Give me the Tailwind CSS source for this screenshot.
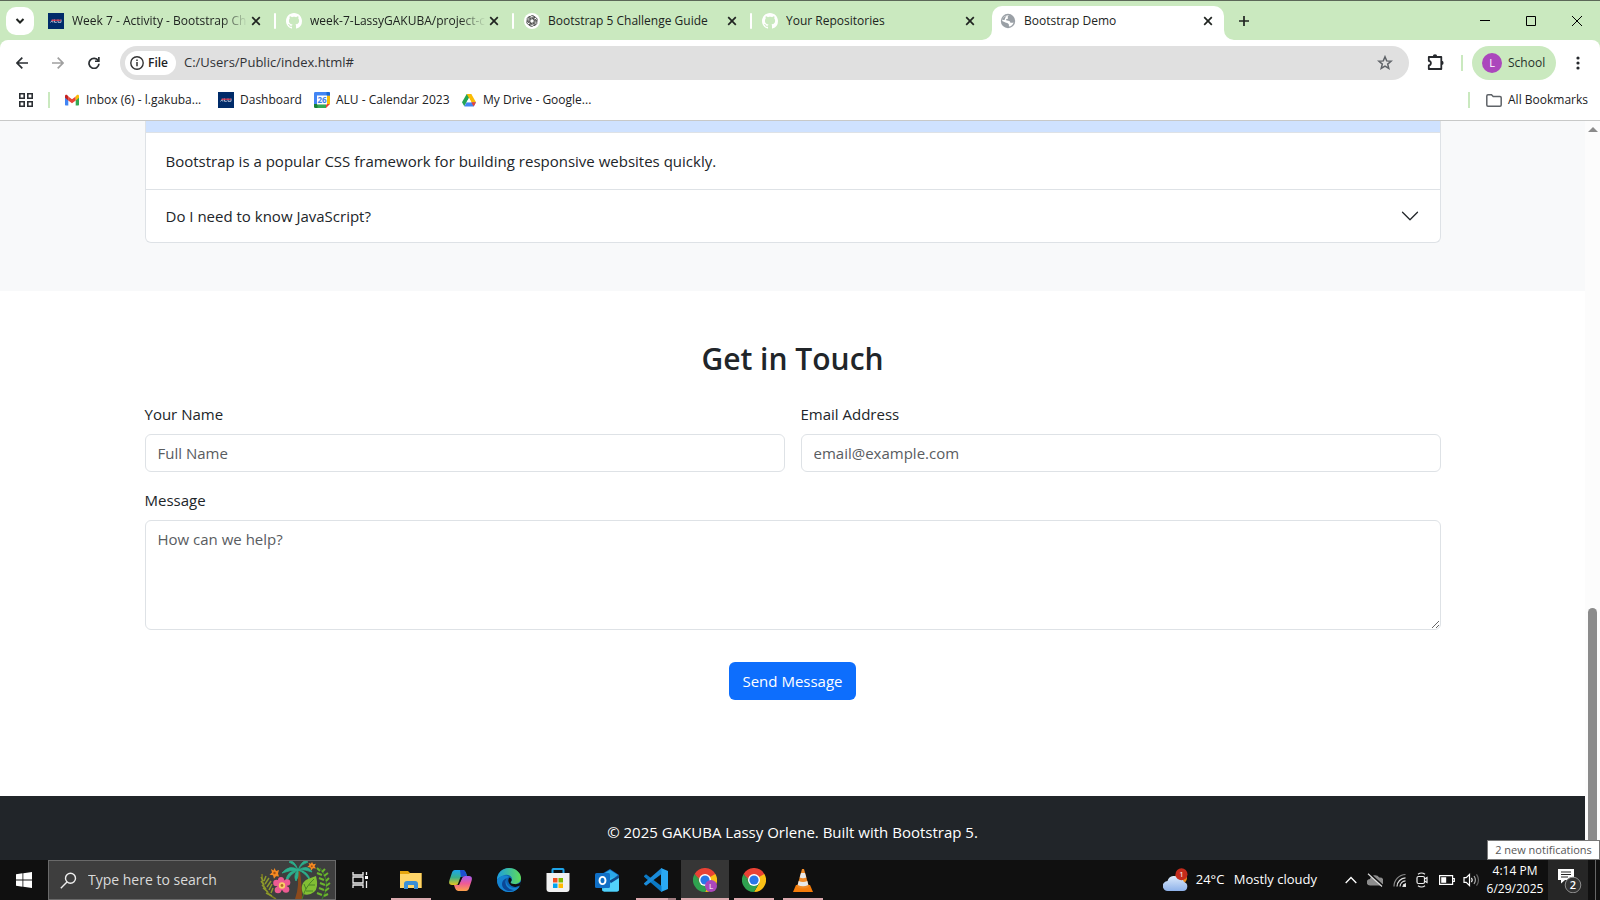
<!DOCTYPE html>
<html lang="en">
<head>
<meta charset="utf-8">
<title>Bootstrap Demo</title>
<script src="https://cdn.jsdelivr.net/npm/@tailwindcss/browser@4"></script>
</head>
<body class="h-screen overflow-hidden flex flex-col bg-white font-['Open_Sans',sans-serif] text-[#212529]">

<svg class="hidden">
  <symbol id="x" viewBox="0 0 10 10"><path d="M1.200 1.200l7.600 7.600M8.800 1.200L1.200 8.800" stroke="#202421" stroke-width="1.700" fill="none"/></symbol>
  <symbol id="alu" viewBox="0 0 16 16"><rect width="16" height="16" fill="#002b69"/><path d="M2.500 9.500L4.800 6.800V9.500M6.500 6.500V9.300H8.800M10 6.500V9.300H13V6.500" stroke="#c3c9dc" stroke-width=".9" fill="none"/><path d="M3.500 7.200h9.500" stroke="#e4364a" stroke-width="1.200"/></symbol>
  <symbol id="github" viewBox="0 0 16 16"><path fill="#fff" d="M8 0C3.580 0 0 3.580 0 8c0 3.540 2.290 6.530 5.470 7.590.4.070.55-.17.55-.38 0-.19-.01-.82-.01-1.490-2.010.37-2.530-.49-2.690-.94-.09-.23-.48-.94-.82-1.130-.28-.15-.68-.52-.01-.53.63-.01 1.080.58 1.230.82.72 1.210 1.870.87 2.330.66.07-.52.28-.87.51-1.070-1.780-.2-3.640-.89-3.640-3.950 0-.87.31-1.590.82-2.150-.08-.2-.36-1.020.08-2.120 0 0 .67-.21 2.200.82.64-.18 1.320-.27 2-.27s1.360.09 2 .27c1.530-1.040 2.200-.82 2.200-.82.44 1.100.16 1.920.08 2.120.51.56.82 1.270.82 2.150 0 3.070-1.870 3.750-3.650 3.950.29.25.54.73.54 1.480 0 1.070-.01 1.930-.01 2.200 0 .21.15.46.55.38A8.010 8.010 0 0 0 16 8c0-4.420-3.580-8-8-8"/></symbol>
  <symbol id="chrome" viewBox="0 0 24 24"><path d="M12 12L1.600 6A12 12 0 0 1 22.400 6z" fill="#e94235"/><path d="M12 6H22.400A12 12 0 0 1 12 24l5.200-9z" fill="#fbc116"/><path d="M6.800 15L1.600 6A12 12 0 0 0 12 24l5.200-9z" fill="#2fa24f"/><path d="M12 6h10.400L17 9zM1.600 6L6.800 15 8 8z" fill="#e94235"/><path d="M1.600 6L6.800 15 12 17z" fill="#2fa24f"/><circle cx="12" cy="12" r="6" fill="#fff"/><circle cx="12" cy="12" r="4.600" fill="#2a76e8"/></symbol>
  <symbol id="petal" viewBox="0 0 16 16"><path d="M6 8.800V4.800a2.300 2.300 0 0 1 4.300-1.100M6 5.700l3.500-2 1.600-.2" fill="none" stroke="#333" stroke-width=".75"/></symbol>
</svg>

<!-- Tab strip -->
<header class="flex h-10 shrink-0 items-stretch border-t border-[#5c6858] bg-[#cae9bf] text-xs text-[#202421]">
  <div class="flex w-[38px] items-center pl-1.5 pt-px">
    <button aria-label="Search tabs" class="flex size-7 items-center justify-center rounded-[10px] bg-white"><svg width="10" height="8" viewBox="0 0 10 8"><path d="M1.500 2L5 5.500 8.500 2" stroke="#202421" stroke-width="2" fill="none"/></svg></button>
  </div>
  <div class="flex w-[238px] items-center pl-2.5">
    <svg class="size-4 shrink-0"><use href="#alu"/></svg>
    <a href="#" class="ml-2 w-[176px] overflow-hidden whitespace-nowrap mask-r-from-85%">Week 7 - Activity - Bootstrap Ch</a>
    <button aria-label="Close tab" class="ml-[3px]"><svg class="size-[10px]"><use href="#x"/></svg></button>
    <span class="ml-auto h-4 w-0.5 rounded bg-white"></span>
  </div>
  <div class="flex w-[238px] items-center pl-2.5">
    <svg class="size-4 shrink-0"><use href="#github"/></svg>
    <a href="#" class="ml-2 w-[176px] overflow-hidden whitespace-nowrap mask-r-from-85%">week-7-LassyGAKUBA/project-c</a>
    <button aria-label="Close tab" class="ml-[3px]"><svg class="size-[10px]"><use href="#x"/></svg></button>
    <span class="ml-auto h-4 w-0.5 rounded bg-white"></span>
  </div>
  <div class="flex w-[238px] items-center pl-2.5">
    <svg class="size-4 shrink-0" viewBox="0 0 16 16"><circle cx="8" cy="8" r="8" fill="#fff"/><use href="#petal"/><use href="#petal" transform="rotate(60 8 8)"/><use href="#petal" transform="rotate(120 8 8)"/><use href="#petal" transform="rotate(180 8 8)"/><use href="#petal" transform="rotate(240 8 8)"/><use href="#petal" transform="rotate(300 8 8)"/></svg>
    <a href="#" class="ml-2 w-[176px] overflow-hidden whitespace-nowrap">Bootstrap 5 Challenge Guide</a>
    <button aria-label="Close tab" class="ml-[3px]"><svg class="size-[10px]"><use href="#x"/></svg></button>
    <span class="ml-auto h-4 w-0.5 rounded bg-white"></span>
  </div>
  <div class="flex w-[238px] items-center pl-2.5">
    <svg class="size-4 shrink-0"><use href="#github"/></svg>
    <a href="#" class="ml-2 w-[176px] overflow-hidden whitespace-nowrap">Your Repositories</a>
    <button aria-label="Close tab" class="ml-[3px]"><svg class="size-[10px]"><use href="#x"/></svg></button>
  </div>
  <div class="relative mt-[5px] ml-0.5 flex w-[232px] items-center rounded-t-[10px] bg-white pb-[5px] pl-2">
    <svg class="absolute bottom-0 -left-2.5 size-2.5" viewBox="0 0 10 10"><path d="M10 0v10H0A10 10 0 0 0 10 0" fill="#fff"/></svg>
    <svg class="absolute -right-2.5 bottom-0 size-2.5" viewBox="0 0 10 10"><path d="M0 0v10h10A10 10 0 0 1 0 0" fill="#fff"/></svg>
    <svg class="size-4 shrink-0" viewBox="0 0 16 16"><circle cx="8" cy="8" r="7.200" fill="#9aa0a6"/><path d="M9.500 2.300C8.200 2.600 7.400 3.400 7.800 4.500c.4.900 0 1.400-.9 1.600-1.300.2-1 1.400 0 1.500 2.200.1 3.200.6 3.500 2.100.9.300 2 .2 3.200-.3-.6 2-2.400 3.800-4.500 4.200-.5-1 .2-2.200-.8-2.900-.6-.5-1.500-.7-2.300-.9L2.200 8C2.200 4.800 5.300 1.700 9.500 2.300" fill="#fff"/><path d="M2.300 7C3 4.900 4.600 3.300 6.600 2.700L5.200 5 4.500 7z" fill="#9aa0a6"/></svg>
    <a href="#" class="ml-2 w-[168px] overflow-hidden whitespace-nowrap">Bootstrap Demo</a>
    <button aria-label="Close tab" class="ml-[11px]"><svg class="size-[10px]"><use href="#x"/></svg></button>
  </div>
  <button aria-label="New tab" class="ml-3.5"><svg width="12" height="12" viewBox="0 0 12 12"><path d="M6 1v10M1 6h10" stroke="#202421" stroke-width="1.700"/></svg></button>
  <div class="ml-auto flex">
    <button aria-label="Minimize" class="flex w-[46px] items-center justify-center"><svg width="10" height="10"><path d="M0 4.500h10" stroke="#000"/></svg></button>
    <button aria-label="Maximize" class="flex w-[46px] items-center justify-center"><svg width="10" height="10"><path d="M.5.5h9v9h-9z" stroke="#000" fill="none"/></svg></button>
    <button aria-label="Close" class="flex w-[46px] items-center justify-center"><svg width="10" height="10"><path d="M0 0l10 10M10 0L0 10" stroke="#000"/></svg></button>
  </div>
</header>

<!-- Toolbar -->
<div class="shrink-0 bg-[#cae9bf]">
<div class="flex h-[46px] items-center rounded-t-lg bg-white text-xs">
  <button aria-label="Back" class="ml-4"><svg width="12" height="12" viewBox="0 0 12 12"><path d="M12 6H1M6.300.700L1 6l5.300 5.300" fill="none" stroke="#2b2f33" stroke-width="1.700"/></svg></button>
  <button aria-label="Forward" class="ml-6"><svg width="12" height="12" viewBox="0 0 12 12"><path d="M0 6h11M5.700.700L11 6l-5.300 5.300" fill="none" stroke="#a0a0a0" stroke-width="1.700"/></svg></button>
  <button aria-label="Reload" class="ml-6"><svg width="12" height="12" viewBox="0 0 12 12"><path d="M10.300 3.800A5 5 0 1 0 11 6.800" fill="none" stroke="#2b2f33" stroke-width="1.700"/><path d="M11.700 0v5H7V3.500h3V0z" fill="#2b2f33"/></svg></button>
  <div class="ml-5 flex h-[34px] flex-1 items-center rounded-full bg-[#e0e0e0] pl-[5px]">
    <button class="flex h-6 items-center gap-1 rounded-full bg-white pr-2 pl-[5px] font-semibold text-[#202124]"><svg width="14" height="14" viewBox="0 0 14 14"><circle cx="7" cy="7" r="6.200" fill="none" stroke="#333" stroke-width="1.400"/><path d="M7 6v4.200M7 3.500v1.500" stroke="#333" stroke-width="1.500"/></svg>File</button>
    <input aria-label="Address" value="C:/Users/Public/index.html#" class="ml-2 flex-1 bg-transparent text-[13px] text-[#303236] outline-none">
    <button aria-label="Bookmark" class="mr-4"><svg width="16" height="16" viewBox="0 0 16 16"><path d="M8 1.800l1.700 4.100 4.400.3-3.400 2.900 1.100 4.300L8 11.100l-3.800 2.300 1.100-4.300L1.900 6.200l4.400-.3z" fill="none" stroke="#5f6368" stroke-width="1.500"/></svg></button>
  </div>
  <button aria-label="Extensions" class="ml-[18px] pb-0.5"><svg width="18" height="18" viewBox="0 0 18 18"><path d="M1.800 4h12.500v12H1.800v-3.600c2.800-.3 2.800-4.300 0-4.600z" fill="none" stroke="#26292d" stroke-width="1.800" stroke-linejoin="round"/><path d="M5.800 3.500a2.200 2.200 0 0 1 4.400 0zM14.500 7.800a2.100 2.100 0 0 1 0 4.200z" fill="#26292d"/></svg></button>
  <span class="ml-4 h-4 w-0.5 bg-[#cae9bf]"></span>
  <button class="ml-[9px] flex h-[34px] w-21 items-center rounded-full bg-[#cae9bf] pl-2.5 text-[#26322a]"><span class="mr-1.5 flex size-5 items-center justify-center rounded-full bg-[#ab47bc] text-[11px] text-white">L</span>School</button>
  <button aria-label="Menu" class="mr-5 ml-5"><svg width="4" height="14" viewBox="0 0 4 14"><g fill="#26292d"><circle cx="2" cy="2" r="1.600"/><circle cx="2" cy="7" r="1.600"/><circle cx="2" cy="12" r="1.600"/></g></svg></button>
</div>
</div>

<!-- Bookmarks bar -->
<nav aria-label="Bookmarks" class="flex h-[35px] shrink-0 items-center border-b border-[#c8c9c8] bg-white pb-1.5 text-xs whitespace-nowrap text-[#202124]">
  <button aria-label="Apps" class="ml-[19px]"><svg width="14" height="14" viewBox="0 0 14 14"><path d="M.8.8h4.400v4.400H.8zM8.800.8h4.400v4.400H8.800zM.8 8.800h4.400v4.400H.8zM8.800 8.800h4.400v4.400H8.800z" fill="none" stroke="#2b2f33" stroke-width="1.600"/></svg></button>
  <span class="mx-[15px] h-4 w-0.5 bg-[#cae9bf]"></span>
  <a href="#" class="flex w-[153px] items-center gap-[7px]"><svg width="14" height="12" viewBox="0 0 14 12"><path d="M0 2v8.500c0 .6.400 1 1 1h2.300V5z" fill="#4285f4"/><path d="M14 2v8.500c0 .6-.4 1-1 1h-2.300V5z" fill="#34a853"/><path d="M3.300 2.600v4L7 9.300l3.700-2.700v-4L7 5.300z" fill="#ea4335"/><path d="M0 2v1.800l3.300 2.800v-4L2.200 1C1.200.3 0 .9 0 2" fill="#c5221f"/><path d="M14 2v1.800l-3.300 2.800v-4L11.800 1c1-.7 2.200-.1 2.200 1" fill="#fbbc04"/></svg>Inbox (6) - l.gakuba...</a>
  <a href="#" class="flex w-24 items-center gap-1.5"><svg class="size-4"><use href="#alu"/></svg>Dashboard</a>
  <a href="#" class="flex w-[148px] items-center gap-1.5"><svg width="16" height="16" viewBox="0 0 16 16"><path d="M0 1.300C0 .6.600 0 1.300 0h13.400c.7 0 1.300.6 1.300 1.300V4H0z" fill="#4285f4"/><path d="M0 3h4v9H0z" fill="#4285f4"/><path d="M13 3.500h3V12h-3z" fill="#fbbc04"/><path d="M0 12h12v4H1.300A1.300 1.300 0 0 1 0 14.700z" fill="#188038"/><path d="M3.500 12.500H12V16H3.500z" fill="#34a853"/><path d="M12 12h4l-4 4z" fill="#ea4335"/><path d="M12.500 0h2.200c.7 0 1.300.6 1.300 1.300v2.200h-3.500z" fill="#1967d2"/><path d="M3 3.500h10v9H3z" fill="#fff"/><text x="8" y="11" font-size="8" font-weight="700" text-anchor="middle" fill="#3b7de8">26</text></svg>ALU - Calendar 2023</a>
  <a href="#" class="flex items-center gap-[7px]"><svg width="14" height="13" viewBox="0 0 14 13"><path d="M4.700 0L0 8.300l2.300 4L9.300 0z" fill="#23a455"/><path d="M4.700 0h4.600L14 8.300H9.300z" fill="#fbbc04"/><path d="M4.700 8.300H14l-2.300 4.200H2.300z" fill="#4285f4"/><path d="M9.300 8.300H14l-2.300 4.200z" fill="#ea4335"/><path d="M7 4L4.500 8.300h5z" fill="#fff"/></svg>My Drive - Google...</a>
  <span class="ml-auto h-4 w-0.5 bg-[#cae9bf]"></span>
  <a href="#" class="mr-3 ml-4 flex items-center gap-1.5"><svg width="16" height="13" viewBox="0 0 16 13"><path d="M.8 2c0-.7.5-1.200 1.200-1.200h3.500l1.700 1.700H14c.7 0 1.200.5 1.200 1.200V11c0 .7-.5 1.200-1.200 1.200H2c-.7 0-1.200-.5-1.200-1.200z" fill="none" stroke="#5f6368" stroke-width="1.500"/></svg>All Bookmarks</a>
</nav>

<!-- Page viewport -->
<div class="flex min-h-0 flex-1">
  <main class="min-w-0 flex-1 overflow-hidden text-[15px] leading-6">
    <section class="bg-[#f8f9fa] pb-12">
      <div class="mx-auto max-w-[1320px] px-3">
        <div class="rounded-b-md border border-t-0 border-[#dee2e6] bg-white">
          <div class="h-3 border-b border-[#dee2e6] bg-[#cfe2ff]"></div>
          <p class="px-5 py-4">Bootstrap is a popular CSS framework for building responsive websites quickly.</p>
          <button class="flex w-full items-center justify-between border-t border-[#dee2e6] px-5 py-3.5 text-left">Do I need to know JavaScript?
            <svg class="size-5" viewBox="0 0 16 16" fill="none" stroke="#212529" stroke-linecap="round" stroke-linejoin="round"><path d="m2 5 6 6 6-6"/></svg></button>
        </div>
      </div>
    </section>
    <section class="bg-white py-12">
      <div class="mx-auto max-w-[1320px] px-3">
        <h2 class="mb-[23px] text-center text-[30px] leading-10 font-semibold">Get in Touch</h2>
        <form class="mb-12 grid grid-cols-2 gap-4">
          <div class="flex flex-col gap-2"><label for="name">Your Name</label><input id="name" placeholder="Full Name" class="h-[38px] rounded-md border border-[#dee2e6] px-3 placeholder:text-[#595c5f]"></div>
          <div class="flex flex-col gap-2"><label for="email">Email Address</label><input id="email" type="email" placeholder="email@example.com" class="h-[38px] rounded-md border border-[#dee2e6] px-3 placeholder:text-[#595c5f]"></div>
          <div class="col-span-2 flex flex-col gap-2"><label for="message">Message</label><textarea id="message" placeholder="How can we help?" class="h-[110px] resize-y rounded-md border border-[#dee2e6] px-3 py-1.5 placeholder:text-[#595c5f]"></textarea></div>
          <div class="col-span-2 mt-4 flex justify-center"><button type="button" class="h-[38px] rounded-md bg-[#0d6efd] px-[13px] text-white">Send Message</button></div>
        </form>
      </div>
    </section>
    <footer class="bg-[#212529] py-6 text-center text-white">© 2025 GAKUBA Lassy Orlene. Built with Bootstrap 5.</footer>
  </main>
  <div class="flex w-[15px] flex-col items-center bg-[#fcfcfc]">
    <svg class="mt-1.5 shrink-0" width="10" height="5" viewBox="0 0 10 5"><path d="M5 0l5 5H0z" fill="#8b8b8b"/></svg>
    <div class="grow-[66]"></div>
    <div class="w-[9px] grow-[35] rounded-t-full bg-[#8b8b8b]"></div>
  </div>
</div>

<!-- Taskbar -->
<div class="relative flex h-10 shrink-0 items-center bg-[#101010] text-white">
  <button aria-label="Start" class="flex w-12 justify-center"><svg width="16" height="16" viewBox="0 0 16 16"><path d="M0 2.200l6.500-.9v6.300H0zM7.300 1.200L16 0v7.600H7.300zM0 8.400h6.500v6.300L0 13.800zM7.300 8.400H16V16l-8.700-1.200z" fill="#fff"/></svg></button>
  <label class="flex h-10 w-72 items-center border border-[#6a6a6a] bg-[#3e3e3e] pl-[11px]">
    <svg width="17" height="17" viewBox="0 0 17 17"><circle cx="10.500" cy="6.200" r="5" fill="none" stroke="#eee" stroke-width="1.400"/><path d="M7 10L.8 16.200" stroke="#eee" stroke-width="1.400"/></svg>
    <input aria-label="Search" placeholder="Type here to search" class="ml-[11px] w-[170px] bg-transparent text-sm outline-none placeholder:text-[#dadada]">
    <svg class="ml-0.5" width="72" height="38" viewBox="0 0 72 38">
      <g stroke="#7d7d22" stroke-width="1.500" fill="none"><path d="M2 13q0 18 14 25"/><path d="M3 20l-2-4M4 24l-3-4M6 28l-4-4M8 31l-5-4M12 35l-6-3M4 20l2-5M5 23l4-6M7 26l4-6M9 29l3-6M11 32l2-5" stroke="#8c9a2c"/></g>
      <path d="M35 38Q40 24 37 11l3-1q2 17 2 28z" fill="#8c4a1c"/>
      <g fill="#2bb08d" stroke="#2bb08d" stroke-width=".8"><path d="M38 9Q30 3 22 12q8-3 16-3M38 9Q34-2 29 1q6 2 9 8M38 9Q43-3 48 1q-7 2-10 8M38 9Q48 3 52 11q-7-3-14-2M38 9q-12 1-12 12 4-8 12-12M38 9q11 1 12 11-4-8-12-11M38 9q-5 5-2 11 3-4 2-11"/></g>
      <g stroke="#6ab52c" stroke-width="2" fill="none"><path d="M60 7q12 15 2 31" stroke="#3e7d2c" stroke-width="1.200"/><path d="M60 10l-3-3M62 14l-5-2M64 19l-5-2M65 24l-5-2M64 29l-5-2M62 34l-5-2M62 11l3-3M64 15l4-3M66 20l3-3M66 25l4-3M65 30l4-3M64 35l4-2"/></g>
      <path d="M43 33q-4-11 5-15l8-3q3 12-2 16-5 4-11 2" fill="#82bf34"/><path d="M42 38q3-12 12-20M46 28l-2-5M49 24h6M46 30h7" stroke="#4a8428" fill="none"/>
      <g fill="#ee5b92"><circle cx="21" cy="19" r="3"/><circle cx="27" cy="21.500" r="3.300"/><circle cx="26" cy="28.500" r="3.300"/><circle cx="18" cy="29" r="3.300"/><circle cx="16.500" cy="22" r="3.300"/><circle cx="22" cy="24.500" r="5"/></g><circle cx="22" cy="24.500" r="3.200" fill="#f9cf67"/><circle cx="22" cy="24.500" r="1.400" fill="#b56a2c"/>
      <path d="M14.500 7l1.500 3 3-1-1 3.500 1 3-3-.2-2 2.500-1-3.500-3.500-.5 2.500-2.300-1-3.500 2.500 1.500z" fill="#f58a22"/><path d="M52 1l1.200 2.200L56 2.700l-1.500 2.500L56 7.500l-3-.2-1.700 2.200-1-3-3-.4 2.200-2L48.500 2l2.400.7z" fill="#f58a22"/><circle cx="14.500" cy="12" r="1.200" fill="#a75214"/><circle cx="51.800" cy="5.200" r="1" fill="#a75214"/>
    </svg>
  </label>
  <button aria-label="Task view" class="flex w-12 justify-center"><svg width="17" height="16" viewBox="0 0 17 16" fill="none" stroke="#eee" stroke-width="1.300"><path d="M1 0v3h10V0M1 16v-3h10v3M1 5h10v6H1zM14.500 0v3M14.500 9v7"/><path d="M13 4h3v3h-3z" fill="#fff" stroke="none"/></svg></button>
  <div class="ml-[3px] flex h-10 gap-px">
    <button aria-label="File Explorer" class="relative flex w-12 items-center justify-center"><svg width="22" height="18" viewBox="0 0 22 18"><path d="M0 0h8l2 2h11.500v15H0z" fill="#e6a50f"/><path d="M0 3h9l1-1h11.500v15H0z" fill="#ffd569"/><path d="M4 18v-5q0-3 3-3h8q3 0 3 3v5h-4v-4H8v4z" fill="#3b8fd6"/></svg><span class="absolute inset-x-1 bottom-0 h-0.5 bg-[#dba9ae]"></span></button>
    <button aria-label="Copilot" class="flex w-12 items-center justify-center"><svg width="23" height="21" viewBox="0 0 23 21"><defs><linearGradient id="c1" x2="0" y2="1"><stop stop-color="#1aa6ef"/><stop offset=".5" stop-color="#3ab08a"/><stop offset="1" stop-color="#e6c41e"/></linearGradient><linearGradient id="c2" x2="0" y2="1"><stop stop-color="#a45cf2"/><stop offset=".5" stop-color="#ef5a96"/><stop offset="1" stop-color="#fba14a"/></linearGradient></defs><path d="M6 0h8q2 0 3 3l1 3h-3q-2 0-3 3l-2 4q-1 2-3 2H3q-4 0-2.500-5l2-6Q3.500 0 6 0" fill="url(#c1)"/><path d="M11 0h3q2 0 3 3l1 3h-3q-2 0-3 2z" fill="#1d4fd0"/><path d="M17 21H9q-2 0-3-3l-1-3h3q2 0 3-3l2-4q1-2 3-2h4q4 0 2.500 5l-2 6Q19.500 21 17 21" fill="url(#c2)"/><path d="M13.500 7L10 15H8.500l3-8z" fill="#101010"/></svg></button>
    <button aria-label="Edge" class="flex w-12 items-center justify-center"><svg width="24" height="24" viewBox="0 0 24 24"><defs><linearGradient id="e1"><stop stop-color="#1c9de0"/><stop offset="1" stop-color="#5fdc58"/></linearGradient></defs><circle cx="12" cy="12" r="12" fill="#0d62b4"/><path d="M0 12C0 5 5 0 12 0s12 5 12 10c0 4-3 6-7 6-3 0-4-1-3-2 3-4-1-8-6-7-4 1-7 3-8 5" fill="url(#e1)"/><path d="M0 12c2-4 9-6 12-3-4 1-4 7 1 10 4 2 7 1 10-1-3 5-8 6.500-12 6C4 23 0 18 0 12" fill="#1583d0"/><path d="M10 10c-4 5 0 12 7 12-6 3-12-1-12-6 0-3 2-5 5-6" fill="#0b4796"/><path d="M12.500 9.500c-3 3 0 9 6 9.500l4.500-1.500 1.500-4.500c-2 3-5.500 3.500-7.500 3-3-.5-4-1-3-2.500 1-1 1-3-1.500-4" fill="#101010"/></svg></button>
    <button aria-label="Microsoft Store" class="flex w-12 items-center justify-center"><svg width="24" height="24" viewBox="0 0 24 24"><path d="M6.500 6V1.800q0-.8.800-.8h9.400q.8 0 .8.800V6" fill="none" stroke="#1fa4e8" stroke-width="2"/><path d="M.5 5h23v16q0 3-3 3h-17q-3 0-3-3z" fill="#f1f1f1"/><path d="M7 10h4.500v4.500H7z" fill="#f25022"/><path d="M12.500 10H17v4.500h-4.500z" fill="#7fba00"/><path d="M7 15.500h4.500V20H7z" fill="#00a4ef"/><path d="M12.500 15.500H17V20h-4.500z" fill="#ffb900"/></svg></button>
    <button aria-label="Outlook" class="flex w-12 items-center justify-center"><svg width="25" height="23" viewBox="0 0 25 23"><path d="M5 6l10-6 9 6v9H5z" fill="#1266b8"/><path d="M8 5l7-4 8 5-8 6z" fill="#2ba8ea"/><path d="M7 11l17-4v13q0 2.500-2 2.500H9q-2 0-2-2z" fill="#30bdf4"/><path d="M7 21l17-13v12q0 2.500-2 2.500H9z" fill="#52d2fa"/><path d="M14 12l10-6v3l-8 5z" fill="#104a8d"/><rect y="4" width="15" height="15" rx="1.500" fill="#0f6fc6"/><ellipse cx="7.500" cy="11.500" rx="3" ry="3.600" fill="none" stroke="#fff" stroke-width="1.900"/></svg></button>
    <button aria-label="Visual Studio Code" class="relative flex w-12 items-center justify-center"><svg width="24" height="24" viewBox="0 0 24 24"><path d="M17 0l7 3v18l-7 3z" fill="#2aa8f2"/><path d="M0 8l2-1.700L17.500 18v6L0 8.700z" fill="#0b79c4"/><path d="M0 16l2 1.700L17.500 6V0L0 15.300z" fill="#1a8cdb"/></svg><span class="absolute inset-x-1 bottom-0 h-0.5 border-r-8 border-[#a17c80] bg-[#dba9ae]"></span></button>
    <button aria-label="Chrome, School profile" class="relative flex w-12 items-center justify-center bg-[#363636]"><svg width="24" height="24" viewBox="0 0 24 24"><use href="#chrome"/><circle cx="18" cy="18" r="6" fill="#ab47bc"/><text x="18" y="21" font-size="8" text-anchor="middle" fill="#fff">L</text></svg><span class="absolute inset-x-0 bottom-0 h-0.5 bg-[#dba9ae]"></span></button>
    <button aria-label="Chrome" class="relative flex w-12 items-center justify-center"><svg width="24" height="24"><use href="#chrome"/></svg><span class="absolute inset-x-1 bottom-0 h-0.5 bg-[#dba9ae]"></span></button>
    <button aria-label="VLC" class="relative flex w-12 items-center justify-center"><svg width="20" height="23" viewBox="0 0 20 23"><path d="M3 16h14l3 7H0z" fill="#f57c0a"/><path d="M9 0h2l5 18q-6 3-12 0z" fill="#f08a28"/><path d="M8 4h4l1.300 4.500q-3.300 1.500-6.600 0zM5.700 12q4.300 2 8.600 0l1 4q-5.300 2.500-10.600 0z" fill="#e8e8e8"/></svg><span class="absolute inset-x-1 bottom-0 h-0.5 bg-[#dba9ae]"></span></button>
  </div>
  <div class="ml-auto flex h-10 items-center">
    <button class="flex items-center text-[13px] whitespace-nowrap"><svg class="mr-2" width="25" height="24" viewBox="0 0 25 24"><defs><linearGradient id="w" x2="0" y2="1"><stop stop-color="#dceafb"/><stop offset="1" stop-color="#8eb2ea"/></linearGradient></defs><circle cx="18" cy="10" r="6" fill="#e8891c"/><path d="M5 23a5 5 0 0 1-.5-10A7 7 0 0 1 17 11q3 0 4 3a4.600 4.600 0 0 1-1 9z" fill="url(#w)"/><circle cx="18.500" cy="6.200" r="6" fill="#c42b1c"/><text x="18.500" y="9.200" font-size="8" text-anchor="middle" fill="#fff">1</text></svg><span class="w-[38px] text-left">24°C</span><span>Mostly cloudy</span></button>
    <button aria-label="Show hidden icons" class="ml-7"><svg width="12" height="8" viewBox="0 0 12 8"><path d="M.7 7L6 1.500 11.300 7" fill="none" stroke="#fff" stroke-width="1.300"/></svg></button>
    <svg class="ml-2.5" width="16" height="14" viewBox="0 0 16 14"><path d="M3 12.500a3.200 3.200 0 0 1 0-6.500 5.200 5.200 0 0 1 9.300-1.500A4 4 0 0 1 13 12.500z" fill="#8c8c8c"/><path d="M2 .2L15.500 12.500" stroke="#101010" stroke-width="2"/><path d="M1 .8L15 13.500" stroke="#ddd" stroke-width="1.200"/></svg>
    <svg class="ml-2.5" width="13" height="14" viewBox="0 0 13 14" fill="none" stroke="#ddd" stroke-width="1.200"><path d="M1 13.500A12 12 0 0 1 12.500 1.500" stroke="#888"/><path d="M4 13.500a9 9 0 0 1 8.500-8.700M7 13.500a6 6 0 0 1 5.500-5.700"/><path d="M10 13.500a3 3 0 0 1 2.500-2.700v2.700z" fill="#fff"/></svg>
    <svg class="ml-2.5" width="13" height="16" viewBox="0 0 13 16" fill="none" stroke="#eee" stroke-width="1.200"><path d="M2 2.300q3.500-2.600 7 0M2 13.700q3.500 2.600 7 0"/><rect x="1" y="4.500" width="7.500" height="7" rx="1.500"/><path d="M8.500 7l2.500-1.500v5L8.500 9"/></svg>
    <svg class="ml-2.5" width="16" height="10" viewBox="0 0 16 10"><path d="M.6.600h13v8.800H.6zM14 3.500h1.300v3H14" fill="none" stroke="#fff" stroke-width="1.200"/><path d="M2.200 2.200h5v5.600h-5z" fill="#fff"/></svg>
    <svg class="ml-2" width="17" height="14" viewBox="0 0 17 14" fill="none" stroke="#fff" stroke-width="1.200"><path d="M1 4.700h2.200L6.500 1.500v11L3.200 9.300H1z"/><path d="M8.500 4.800q1.500 2.200 0 4.400"/><path d="M11 3q2.800 4 0 8" stroke="#aaa"/><path d="M13.500 1.300q4 5.700 0 11.400" stroke="#666"/></svg>
    <button class="ml-1 w-[62px] text-center text-xs leading-[18px] whitespace-nowrap">4:14 PM<br>6/29/2025</button>
    <button aria-label="Notifications" class="ml-0.5 flex h-10 w-10 items-center justify-center bg-[#262626] pl-0.5"><svg width="26" height="26" viewBox="0 0 26 26"><path d="M2 2h16v11H9l-4 3.500V13H2z" fill="#fff"/><path d="M5 5h10M5 7.500h10M5 10h7" stroke="#262626" stroke-width="1.200"/><circle cx="17" cy="18" r="7.800" fill="#333" stroke="#8d8d8d"/><text x="17" y="22" font-size="11" font-weight="600" text-anchor="middle" fill="#fff">2</text></svg></button>
    <span class="mr-1 ml-[7px] h-10 w-px bg-[#666]"></span>
  </div>
  <div role="tooltip" class="absolute right-0 bottom-10 flex h-5 w-[113px] items-center justify-center border border-[#777] bg-white text-[11px] whitespace-nowrap text-[#575757]">2 new notifications</div>
</div>
</body>
</html>
